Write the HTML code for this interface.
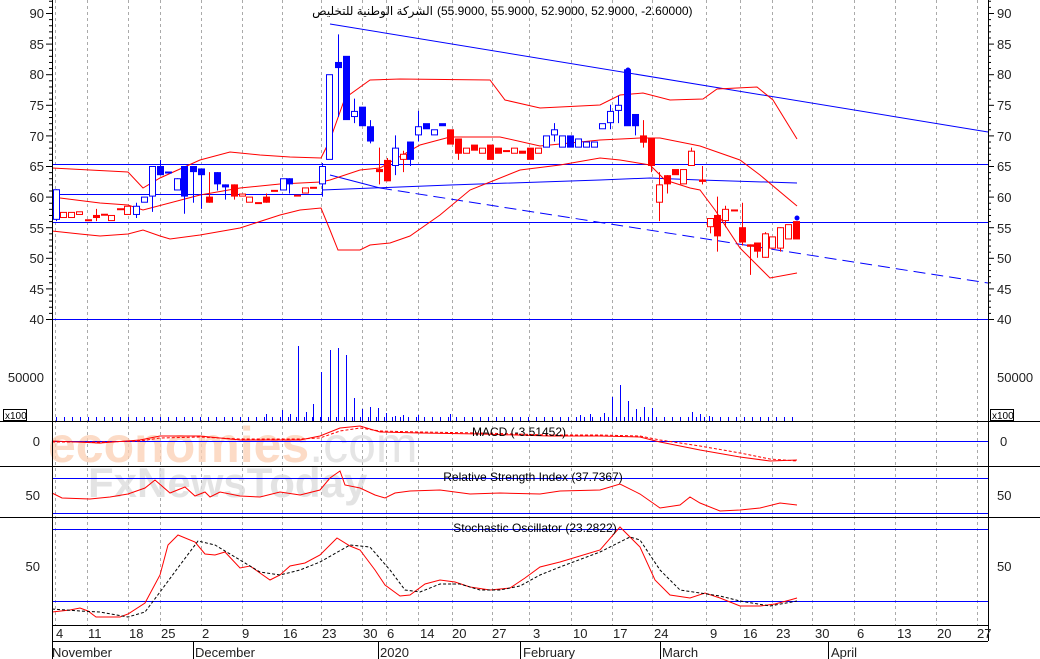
<!DOCTYPE html>
<html><head><meta charset="utf-8"><style>
html,body{margin:0;padding:0;background:#fff;width:1040px;height:659px;overflow:hidden}
svg{display:block;font-family:"Liberation Sans","DejaVu Sans",sans-serif}
.l{font-size:13px;fill:#222}
</style></head><body>
<svg id="s" width="1040" height="659" viewBox="0 0 1040 659" xmlns="http://www.w3.org/2000/svg">
<rect width="1040" height="659" fill="#fff"/>
<g id="grid" stroke="#aaa" stroke-dasharray="3,3" stroke-width="1"></g>
<text x="48" y="462" font-size="50" font-weight="bold" fill="#fbd0b4" opacity="0.75">economies<tspan fill="#ddd" font-weight="normal">.com</tspan></text>
<text x="88" y="497" font-size="42" font-weight="bold" fill="#ddd" opacity="0.8">FxNewsToday</text>
<g id="ind"></g>
<g id="c"></g>
<g stroke="#000" stroke-width="1">
<line x1="52.5" y1="0" x2="52.5" y2="659"/>
<line x1="988.5" y1="0" x2="988.5" y2="641"/>
<line x1="0" y1="421.5" x2="1040" y2="421.5"/>
<line x1="0" y1="466.5" x2="1040" y2="466.5"/>
<line x1="0" y1="517.5" x2="1040" y2="517.5"/>
<line x1="52" y1="625.5" x2="988" y2="625.5"/>
<line x1="52" y1="641.5" x2="988" y2="641.5"/>
<line x1="193.5" y1="641" x2="193.5" y2="659"/>
<line x1="378.5" y1="641" x2="378.5" y2="659"/>
<line x1="520.5" y1="641" x2="520.5" y2="659"/>
<line x1="660.5" y1="641" x2="660.5" y2="659"/>
<line x1="828.5" y1="641" x2="828.5" y2="659"/>
</g>
<g id="ticks" stroke="#000"></g>
<rect x="3.5" y="409.5" width="23" height="11" fill="#fff" stroke="#000"/>
<text x="5" y="419" font-size="10">x100</text>
<rect x="990.5" y="409.5" width="23" height="11" fill="#fff" stroke="#000"/>
<text x="992" y="419" font-size="10">x100</text>
<g class="l" text-anchor="end">
<text x="44" y="18">90</text><text x="44" y="49">85</text><text x="44" y="79">80</text><text x="44" y="110">75</text><text x="44" y="141">70</text><text x="44" y="171">65</text><text x="44" y="202">60</text><text x="44" y="233">55</text><text x="44" y="263">50</text><text x="44" y="294">45</text><text x="44" y="324">40</text><text x="44" y="382">50000</text><text x="40" y="446">0</text><text x="40" y="500">50</text><text x="40" y="571">50</text>
</g>
<g class="l">
<text x="997" y="18">90</text><text x="997" y="49">85</text><text x="997" y="79">80</text><text x="997" y="110">75</text><text x="997" y="141">70</text><text x="997" y="171">65</text><text x="997" y="202">60</text><text x="997" y="233">55</text><text x="997" y="263">50</text><text x="997" y="294">45</text><text x="997" y="324">40</text><text x="997" y="382">50000</text><text x="1000" y="446">0</text><text x="997" y="500">50</text><text x="997" y="571">50</text>
</g>
<text x="433" y="15" font-size="12" text-anchor="end">الشركة الوطنية للتخليص</text>
<text x="437" y="15" font-size="12">(55.9000, 55.9000, 52.9000, 52.9000, -2.60000)</text>
<text x="519" y="436" font-size="12" text-anchor="middle">MACD (-3.51452)</text>
<text x="533" y="481" font-size="12" text-anchor="middle">Relative Strength Index (37.7367)</text>
<text x="535" y="532" font-size="12" text-anchor="middle">Stochastic Oscillator (23.2822)</text>
<g class="l">
<text x="56" y="638">4</text><text x="88" y="638">11</text><text x="129" y="638">18</text><text x="161" y="638">25</text><text x="202" y="638">2</text><text x="242" y="638">9</text><text x="283" y="638">16</text><text x="322" y="638">23</text><text x="363" y="638">30</text><text x="387" y="638">6</text><text x="420" y="638">14</text><text x="452" y="638">20</text><text x="492" y="638">27</text><text x="533" y="638">3</text><text x="573" y="638">10</text><text x="613" y="638">17</text><text x="654" y="638">24</text><text x="710" y="638">9</text><text x="743" y="638">16</text><text x="776" y="638">23</text><text x="815" y="638">30</text><text x="857" y="638">6</text><text x="897" y="638">13</text><text x="937" y="638">20</text><text x="977" y="638">27</text>
<text x="52" y="657">November</text><text x="195" y="657">December</text><text x="380" y="657">2020</text><text x="523" y="657">February</text><text x="662" y="657">March</text><text x="831" y="657">April</text>
</g>
</svg>
<script>
var NS="http://www.w3.org/2000/svg",S=document.getElementById('s');
function el(p,t,a){var e=document.createElementNS(NS,t);for(var k in a)e.setAttribute(k,a[k]);document.getElementById(p).appendChild(e);return e;}
function Y(p){return 13+(90-p)*6.12;}
[55,87,128,160,201,242,282,321,362,386,418,452,492,529,571,612,652,706,740,772,812,854,895,936,977].forEach(function(x){el('grid','line',{x1:x+.5,y1:0,x2:x+.5,y2:625});});
for(var p=40;p<=92;p++){var w=p%5==0?6:3;el('ticks','line',{x1:52-w,y1:Y(p)+.5,x2:52,y2:Y(p)+.5});el('ticks','line',{x1:988,y1:Y(p)+.5,x2:988+w,y2:Y(p)+.5});}
function pl(pts,col,dash,g){el(g||'ind','polyline',{points:pts,fill:'none',stroke:col,'stroke-width':1,'stroke-dasharray':dash||''});}
[[164.5,52,988],[222.5,52,988],[319.5,52,988],[194.5,52,322],[441.5,52,988],[478.5,52,988],[513.5,52,988],[529.5,52,988],[601.5,52,988]].forEach(function(h){el('ind','line',{x1:h[1],y1:h[0],x2:h[2],y2:h[0],stroke:'#00f'});});
pl("322,190 450,185 600,180 650,178 700,180 797,183","#00f");
pl("330,24 988,132","#00f");
pl("330,175 380,188","#00f");
pl("380,188 988,283","#00f","12,6");
pl("52,168 128,172 143,188 160,178 200,160 230,152 260,155 290,157 321,158 330,140 345,98 370,80 400,79 490,80 505,100 540,108 600,105 620,95 643,93 670,100 703,99 717,89 757,87 773,100 797,139","#f00");
pl("52,197 100,203 128,205 143,210 200,195 240,188 280,184 321,182 330,180 360,170 380,168 420,145 450,137 500,137 540,146 600,140 640,138 660,138 700,146 740,160 760,175 797,206","#f00");
pl("52,231 80,234 100,236 128,234 143,230 160,236 170,239 200,235 240,228 280,215 300,210 321,208 330,230 338,250 360,250 370,245 390,243 410,236 440,215 470,190 520,170 560,165 600,158 620,160 650,165 665,180 690,188 700,190 715,210 740,248 770,278 797,273","#f00");
pl("52,441 100,443 140,440 160,436 200,436 240,440 300,440 320,436 340,428 360,426 380,432 420,433 480,434 550,436 600,436 640,437 660,442 700,450 740,457 770,461 797,460","#f00");
pl("52,442 100,442 140,441 160,438 200,437 240,439 300,439 320,438 340,431 360,428 380,431 420,432 480,433 550,435 600,435 640,436 660,440 700,446 740,453 770,459 797,461","#f00","3,2");
pl("52,493 62,498 90,499 110,497 128,494 145,488 155,480 170,493 185,487 195,496 205,492 210,497 220,492 240,496 260,497 280,492 300,495 320,490 330,478 340,471 345,485 360,488 375,495 385,498 395,493 410,491 440,490 470,494 500,493 540,494 560,491 600,490 620,484 640,494 660,508 680,505 690,497 700,503 720,511 740,510 760,508 780,503 797,505","#f00");
pl("52,612 70,610 80,608 88,611 96,617 120,617 128,614 145,603 160,575 168,545 178,535 195,542 205,554 215,555 225,552 240,568 250,566 270,580 280,575 290,566 305,563 320,555 337,538 350,546 360,550 375,570 385,585 400,596 410,595 425,584 440,580 455,582 470,587 490,590 510,588 525,578 540,567 560,562 600,550 620,527 640,547 655,580 670,595 690,598 705,593 720,598 740,606 760,606 775,604 790,600 797,598","#f00");
pl("52,609 80,611 100,612 128,617 145,612 160,592 180,565 198,541 215,545 240,560 260,572 280,575 300,570 320,562 350,545 370,547 390,570 405,590 420,592 440,584 460,584 480,590 500,590 520,586 540,575 560,567 600,552 630,537 640,540 660,570 680,590 700,593 720,596 740,601 770,606 797,601","#000","3,2");
var vol=[[298,346],[330,350],[338,348],[346,355],[321,372],[313,404],[306,412],[354,398],[362,409],[370,407],[378,408],[386,413],[395,416],[620,385],[612,397],[604,413],[628,401],[636,409],[644,407],[652,408],[692,412],[700,414],[709,416],[266,414],[282,410],[290,414],[403,415],[418,415],[450,414],[580,415],[590,414]];
for(var x=56;x<=797;x+=8)vol.push([x,417]);
vol.forEach(function(v){el('c','line',{x1:v[0]+.5,y1:v[1],x2:v[0]+.5,y2:421,stroke:'#00f'});});
var C=[[56,56.2,61.2,'b',0,61.2,56],[63,56.5,57.5,'r',0],[71,56.5,57.5,'r',0],[79,57,57.6,'r',0],[88,56.2,56.3,'r',1],[96,56.5,57,'r',1,58,56],[104,57.1,57.2,'r',1],[111,56,57,'r',0],[120,58,58.1,'r',1],[127,57,58.5,'r',0],[136,57,58.5,'b',0,59,56.5],[144,59,60,'b',0],[152,60,65,'b',0,65,57.5],[160,63.5,65,'b',1,66,63.5],[168,64,64.1,'b',1],[177,61,63,'b',0,63,61],[184,60,65,'b',1,65,57.2],[193,64,65,'b',1,65,59],[201,63.5,64.6,'b',1,64.6,58],[209,59,60,'r',1,64,59],[217,62,64,'b',1,64,61],[225,61.5,62,'b',1,62,59.5],[234,60,62,'r',1,62,59.5],[242,60,60.5,'r',0],[249,59,60,'r',0],[258,59,59.1,'r',1],[266,59,60,'r',1,60.5,59],[274,61,61.1,'r',1],[283,61,63,'b',0],[289,62,63,'b',1,63,60.5],[297,60,60.3,'r',1],[305,60.5,61.5,'r',0],[313,61.5,61.6,'r',1],[322,62,65,'b',0,65.5,60],[329,66,80,'b',0],[338,81,82,'b',1,86.5,73],[346,72.5,83,'b',1],[354,73,74,'b',0,76,72],[362,71.5,74.7,'b',1],[370,69,71.5,'b',1,72.5,68.7],[379,64,64.5,'r',1,68,62],[387,62.5,66,'r',1,66.3,62.5],[395,65,68,'b',0,70,63.5],[403,66,67,'r',0,67.5,64],[410,66,69,'b',1,69,65],[418,70,71.5,'b',0,74,69],[426,71,72,'b',1],[434,70,71,'b',0],[442,71.5,72,'b',1],[450,68.5,71,'r',1],[458,67,69.5,'r',1,69.5,66],[466,67,68,'r',0],[474,67.5,68.5,'r',1],[482,67,68,'r',0],[490,66,68.5,'r',1],[498,67,68,'r',1],[506,67.5,67.6,'r',1],[514,67,68,'r',0],[522,67,67.5,'r',1],[530,66,68,'r',1],[538,67,68,'r',0],[546,68,70,'b',0],[554,70,71,'b',0,72,69],[562,68,70,'b',0],[570,68,70,'b',1],[578,68,69.5,'b',0],[586,68,69,'b',0],[594,68,69,'b',0],[602,71,72,'b',0],[610,72,74,'b',0,75,71],[618,74,75,'b',0,76.5,72],[627,71.5,80.8,'b',1],[635,71.5,73.5,'b',1,73.5,70],[643,68.8,70,'r',1,72.5,68],[651,65,69.5,'r',1,69.5,64],[659,59,62,'r',0,64,56],[667,62,63.5,'r',1,63.5,60.5],[675,63.5,64.5,'r',1],[683,62,64.5,'r',0],[691,65,67.5,'r',0,68,65],[702,62.4,62.8,'r',1,65,62],[710,55,56.5,'r',0,56.5,54],[717,53.5,57,'r',1,60,51],[725,56,58,'r',0,58.5,55],[734,57.7,57.9,'r',1],[742,52.5,55,'r',1,59,52],[750,51.8,52.2,'r',1,52.2,47.2],[757,51,52.5,'r',1,52.5,50],[765,50,54,'r',0,54.2,50],[772,51.5,53.5,'r',0],[780,51.5,55,'r',0,55,51],[788,53,55.5,'r',0],[796,53,56,'r',1]];
C.forEach(function(c){var col=c[3]=='r'?'#f00':'#00f',x=c[0],t=Y(Math.max(c[1],c[2])),b=Y(Math.min(c[1],c[2]));
 if(c[5]!==undefined){el('c','line',{x1:x+.5,y1:Y(c[5]),x2:x+.5,y2:Y(c[6]),stroke:col});}
 var h=Math.max(b-t,1);
 if(h<=1.5){el('c','rect',{x:x-3,y:t,width:7,height:2,fill:col});}
 else el('c','rect',{x:x-3+(c[4]?0:.5),y:t+(c[4]?0:.5),width:c[4]?7:6,height:c[4]?h:h-1,fill:c[4]?col:'#fff',stroke:c[4]?'none':col});
});
el('c','circle',{cx:628,cy:70,r:2.5,fill:'#00f'});
el('c','circle',{cx:797,cy:218,r:2.5,fill:'#00f'});
</script>
</body></html>
